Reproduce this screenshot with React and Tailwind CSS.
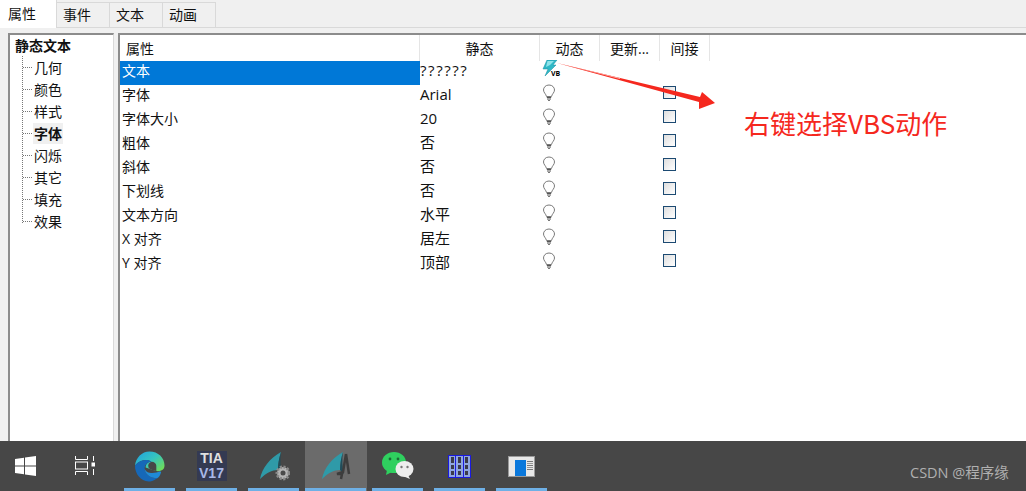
const font = { fontFamily: '"Open Sans", "Noto Sans CJK SC", sans-serif' }

const tabs = ['属性', '事件', '文本', '动画']
const tree = ['几何', '颜色', '样式', '字体', '闪烁', '其它', '填充', '效果']
const rows = [
  ['文本', '??????'],
  ['字体', 'Arial'],
  ['字体大小', '20'],
  ['粗体', '否'],
  ['斜体', '否'],
  ['下划线', '否'],
  ['文本方向', '水平'],
  ['X 对齐', '居左'],
  ['Y 对齐', '顶部'],
]

function VbsIcon() {
  return (
    <span className="relative block w-[18px] h-[18px]">
      <svg width="16" height="17" viewBox="0 0 16 17">
        <path d="M5 0 L15 0 L11 5 L14 5 L3 16 L6 9 L1 9 Z" fill="#2fb8c6" stroke="#1a8fa0" strokeWidth="0.5" />
        <path d="M5.5 1 L12 1 L8 5 L4 7 Z" fill="#8fe3ea" />
      </svg>
      <span className="absolute left-[9px] top-[10px] text-[7px] leading-[8px] font-bold text-black">VB</span>
    </span>
  )
}

function Bulb() {
  return (
    <svg width="14" height="18" viewBox="0 0 14 18" fill="none">
      <path d="M7 1 C3.5 1 1.5 3.5 1.5 6 C1.5 8.5 4 10 4.5 12.5 L9.5 12.5 C10 10 12.5 8.5 12.5 6 C12.5 3.5 10.5 1 7 1 Z" fill="#fff" stroke="#7a7a7a" />
      <path d="M4.8 13.5 H9.2 M5 15 H9 " stroke="#555" strokeWidth="1.2" />
      <path d="M6 16.5 H8" stroke="#777" />
    </svg>
  )
}

function Check() {
  return <span className="block w-[13px] h-[13px] border border-[#1c4a72] bg-gradient-to-br from-[#dedede] to-white" />
}

function Row({ row, index }) {
  const selected = index === 0
  return (
    <div className="flex h-6 items-center">
      <div className={`w-[300px] h-full pl-[2px] pb-[5px] flex items-center ${selected ? 'bg-[#0078d7] text-white' : ''}`}>{row[0]}</div>
      <div className="w-[120px] h-full pb-[5px] flex items-center">
        <span className={index === 0 ? 'text-[15px] tracking-[1.6px]' : 'text-[15px]'}>{row[1]}</span>
      </div>
      <div className="w-[60px] pl-px h-full">
        <div className="pl-px -mt-px">{selected ? <VbsIcon /> : <Bulb />}</div>
      </div>
      <div className="w-[60px]" />
      <div className="w-[50px] pl-[3px] pb-[9px]">{!selected && <Check />}</div>
    </div>
  )
}

function TaskBtn({ active, children }) {
  return (
    <div className={`relative w-[62px] h-[50px] flex items-center justify-center ${active ? 'bg-[#6b6b6b]' : ''}`}>
      {children}
      <span className={`absolute bottom-0 h-[3px] bg-[#6eb0e6] ${active ? 'left-0 right-px' : 'left-[5.5px] w-[51px]'}`} />
    </div>
  )
}

function WinLogo() {
  return (
    <svg width="21" height="20" viewBox="0 0 21 20" fill="#fff">
      <path d="M0 3 L9 1.7 V9.4 H0 Z M10 1.5 L21 0 V9.4 H10 Z M0 10.4 H9 V18.2 L0 17 Z M10 10.4 H21 V20 L10 18.4 Z" />
    </svg>
  )
}

function TaskView() {
  return (
    <svg width="20" height="20" viewBox="0 0 20 20" fill="none" stroke="#fff" strokeWidth="1">
      <path d="M0.5 0 V3.5 H12.5 V0 M0.5 19 V15.5 H12.5 V19" />
      <rect x="0.5" y="6" width="12" height="7" />
      <path d="M18.5 0 V5 M18.5 13 V19" />
      <rect x="17" y="7" width="3" height="3" fill="#fff" />
    </svg>
  )
}

function Edge() {
  return (
    <svg width="31" height="31" viewBox="0 0 32 32">
      <defs>
        <linearGradient id="e1" x1="0" y1="0" x2="1" y2="0.8">
          <stop offset="0" stopColor="#1f9fe0" />
          <stop offset="0.55" stopColor="#35c4c0" />
          <stop offset="1" stopColor="#6fdc5a" />
        </linearGradient>
      </defs>
      <path d="M16 0.5 C25 0.5 31.5 7 31.5 15 C31.5 20 27 21.5 22 20.5 L12 17 C12 13 15 11 18 11 C14 8 6 9 1 15 C2 7 8 0.5 16 0.5 Z" fill="url(#e1)" />
      <path d="M1 15 C6 9 14 8 18 11 C14 11 11 14 11 18 C11 24 17 28 24 28 C20 31 17 31.5 15 31.5 C7 31 1 24 1 15 Z" fill="#1668b8" />
      <path d="M18 11 C21 11 23 13 23 15 L23 20.7 C20 20 16 19 15 17 C14 14 15 12 18 11 Z" fill="#474747" />
      <path d="M11 18 C12 23 20 24 27 21 L28 22 C27 25 26 27 24 28 C17 28 11 24 11 18 Z" fill="#1f8ad6" />
    </svg>
  )
}

function TiaIcon() {
  return (
    <div className="w-[30px] h-[30px] bg-[#343a52] flex flex-col items-center justify-center font-bold" style={{ fontFamily: '"Liberation Sans", sans-serif' }}>
      <span className="text-[#e0e0e0] text-[14px] leading-[15px]">TIA</span>
      <span className="text-[#a9b8e6] text-[14px] leading-[15px]">V17</span>
    </div>
  )
}

function Wing({ gear }) {
  return (
    <svg width="32" height="32" viewBox="0 0 32 32">
      <path d="M2 29 C4 18 12 8 23 2 C21 9 20 14 20 20 C14 20 8 23 2 29 Z" fill="#2f9aa8" />
      <path d="M23 2 C22 10 22 16 24 24 L20 20 C20 14 21 8 23 2 Z" fill="#1f4d5a" />
      {gear ? (
        <g>
          <circle cx="25" cy="23" r="6" fill="#b5b5b5" stroke="#8a8a8a" strokeWidth="3" strokeDasharray="2 1.5" />
          <circle cx="25" cy="23" r="2.5" fill="#4a4a4a" />
        </g>
      ) : (
        <path d="M26 4 L23 22 L17 24 L22 24 L21 29 M26 4 L29 24" stroke="#3d3d3d" strokeWidth="2.5" fill="none" />
      )}
    </svg>
  )
}

function WeChat() {
  return (
    <svg width="32" height="28" viewBox="0 0 32 28">
      <ellipse cx="12" cy="10.5" rx="12" ry="10.5" fill="#2fd05f" />
      <path d="M5 18 L4 23 L10 20 Z" fill="#2fd05f" />
      <circle cx="8" cy="7" r="1.4" fill="#1c6b37" />
      <circle cx="16" cy="7" r="1.4" fill="#1c6b37" />
      <ellipse cx="22.5" cy="17" rx="9" ry="8" fill="#ededed" />
      <path d="M26 23 L28 27 L22 24.5 Z" fill="#ededed" />
      <circle cx="19.5" cy="15" r="1.2" fill="#777" />
      <circle cx="25.5" cy="15" r="1.2" fill="#777" />
    </svg>
  )
}

function Racks() {
  return (
    <div className="flex w-[23px] h-[23px] border border-[#1a1ae0] bg-[#1a1ae0] gap-px">
      {[0, 1, 2].map(i => (
        <div key={i} className="flex-1 bg-[#8fa6e0] flex flex-col items-center justify-around py-px">
          <span className="w-[3px] h-[6px] bg-[#3a3a4a]" />
          <span className="w-[3px] h-[4px] bg-[#3a3a4a]" />
          <span className="w-[3px] h-[4px] bg-[#3a3a4a]" />
        </div>
      ))}
    </div>
  )
}

function WinIcon() {
  return (
    <div className="w-[27px] h-[21px] bg-[#e8e8e8] border border-[#9a9a9a] flex pt-[3px] pl-[6px] gap-px">
      <div className="w-[11px] h-[16px] bg-[#0a78dc]" />
      <div className="flex-1 flex flex-col gap-px pt-px pr-px">
        <span className="h-px bg-[#777]" />
        <span className="h-px bg-[#999]" />
        <span className="h-px bg-[#777]" />
        <span className="h-px bg-[#999]" />
        <span className="h-px bg-[#777]" />
      </div>
    </div>
  )
}

export default function App() {
  return (
    <div className="relative w-[1026px] h-[491px] overflow-hidden flex flex-col bg-[#f0f0f0] text-[14px] text-[#111]" style={font}>
      {/* tabs */}
      <div className="h-7 flex items-end border-b border-[#d9d9d9] shrink-0">
        {tabs.map((t, i) => (
          <div
            key={t}
            className={i === 0
              ? 'w-[57px] h-7 -mb-px bg-white border-r border-[#d9d9d9] pl-2 pb-0.5 flex items-center z-10'
              : 'h-[25px] w-[53px] bg-[#f0f0f0] border-r border-t border-[#d9d9d9] pl-1.5 pb-0.5 flex items-center'}
          >
            {t}
          </div>
        ))}
      </div>

      {/* panels */}
      <div className="flex-1 flex pl-2 pt-[5px] gap-1 min-h-0">
        <div className="w-[106px] bg-white border-t-2 border-l-2 border-[#8c8c8c] pl-[5px] border-r border-r-[#d9d9d9]">
          <div className="h-[21px] flex items-center font-bold">静态文本</div>
          <div className="ml-[7px] border-l border-dotted border-[#777] h-[167px]">
            {tree.map(t => (
              <div key={t} className="h-[22px] flex items-center">
                <span className="w-[9px] border-t border-dotted border-[#777]" />
                <span className={`ml-px px-px ${t === '字体' ? 'font-bold bg-[#f0f0f0]' : ''}`}>{t}</span>
              </div>
            ))}
          </div>
        </div>

        <div className="flex-1 bg-white border-t-2 border-l-2 border-[#8c8c8c]">
          <div className="flex h-[26px] items-center">
            <div className="w-[300px] h-full pl-[6px] flex items-center border-r border-[#e5e5e5]">属性</div>
            <div className="w-[120px] h-full flex items-center justify-center border-r border-[#e5e5e5]">静态</div>
            <div className="w-[60px] h-full flex items-center justify-center border-r border-[#e5e5e5]">动态</div>
            <div className="w-[60px] h-full flex items-center justify-center border-r border-[#e5e5e5]">更新...</div>
            <div className="w-[50px] h-full flex items-center justify-center border-r border-[#e5e5e5]">间接</div>
          </div>
          {rows.map((r, i) => <Row key={r[0]} row={r} index={i} />)}
        </div>
      </div>

      {/* taskbar */}
      <div className="h-[50px] shrink-0 bg-[#474747] flex items-center">
        <div className="w-[50px] flex justify-center"><WinLogo /></div>
        <div className="w-[70px] flex justify-center"><TaskView /></div>
        <div className="flex -ml-[1.5px]">
          <TaskBtn><Edge /></TaskBtn>
          <TaskBtn><TiaIcon /></TaskBtn>
          <TaskBtn><Wing gear /></TaskBtn>
          <TaskBtn active><Wing /></TaskBtn>
          <TaskBtn><WeChat /></TaskBtn>
          <TaskBtn><Racks /></TaskBtn>
          <TaskBtn><WinIcon /></TaskBtn>
        </div>
      </div>

      {/* annotation on top of the screenshot */}
      <svg className="absolute left-[550px] top-[60px]" width="170" height="52" viewBox="0 0 170 52">
        <path d="M7 3 L150 37 L152 32 L165 43 L149 49 L149 42 Z" fill="#f5281e" />
        <path d="M7 3 L70 18 L70 19 Z" fill="#ffb0a8" />
      </svg>
      <div className="absolute left-[744px] top-[105px] text-[26px] leading-9 text-[#f5281e]" style={{ fontFamily: '"Noto Sans CJK SC", sans-serif' }}>右键选择VBS动作</div>
      <div className="absolute left-[910px] top-[463px] text-[14.5px] leading-5 text-[#b0b0b0]">CSDN @程序缘</div>
    </div>
  )
}
